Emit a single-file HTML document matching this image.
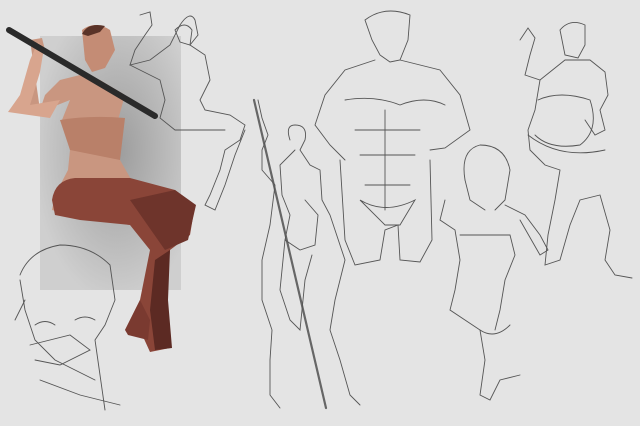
<!DOCTYPE html>
<html><head><style>html,body{margin:0;padding:0;background:#e4e4e4}svg{display:block}</style></head>
<body>
<svg width="640" height="426" viewBox="0 0 640 426" xmlns="http://www.w3.org/2000/svg">
<defs>
<radialGradient id="g" cx="0.55" cy="0.45" r="0.6"><stop offset="0" stop-color="#9c9c9c"/><stop offset="1" stop-color="#cfcfcf"/></radialGradient>
</defs>
<rect width="640" height="426" fill="#e4e4e4"/>
<rect x="40" y="36" width="141" height="254" fill="url(#g)"/>
<!-- painted figure -->
<g>
<path d="M30 40 L42 38 L45 50 L38 60 L30 80 L24 105 L45 110 L70 100 L62 120 L70 150 L68 170 L55 195 L52 210 L80 218 L130 215 L150 205 L140 195 L120 160 L118 120 L125 95 L100 80 L80 75 L60 80 L45 95 L40 110 Z" fill="#c99680"/>
<path d="M8 112 L20 95 L30 60 L38 42 L44 48 L40 72 L30 105 L60 100 L50 118 Z" fill="#d8a58e"/>
<path d="M82 30 Q95 20 110 30 L115 50 L105 68 L92 72 L85 60 Z" fill="#c48c75"/>
<path d="M82 34 Q88 22 105 26 L100 32 L88 36 Z" fill="#5a3328"/>
<path d="M60 120 Q90 115 125 118 L120 160 L95 155 L70 150 Z" fill="#b98069"/>
<path d="M52 200 Q55 180 75 178 L130 178 L175 190 L195 205 L190 235 L170 250 L165 300 L170 348 L150 352 L140 330 L125 330 L140 300 L150 250 L130 225 L80 220 L55 215 Z" fill="#8a4538"/>
<path d="M130 200 L175 190 L196 205 L188 240 L165 250 Z" fill="#6e342b"/>
<path d="M155 260 L170 250 L168 300 L172 348 L155 350 L150 310 Z" fill="#5c2a23"/>
<path d="M125 330 L140 300 L150 320 L148 340 L128 335 Z" fill="#7a3a30"/>
<line x1="9" y1="30" x2="155" y2="116" stroke="#2a2a2a" stroke-width="6" stroke-linecap="round"/>
</g>
<g fill="none" stroke="#555" stroke-width="0.9" stroke-linecap="round">
<!-- top sketch -->
<path d="M140 15 L150 12 L152 25 L145 35 L135 50 L130 65 L150 60 L170 45 L180 25 Q190 10 195 20 L198 35 L190 45 L205 55 L210 80 L200 100 L205 110 L230 115 L245 125 L240 140 L225 150 L220 170 L210 195 L205 205 L215 210 L225 185 L235 155 L245 130"/>
<path d="M130 65 L160 80 L165 100 L160 118 L175 130 L210 130 L225 130"/>
<path d="M175 30 Q185 20 192 30 L190 45 L180 42 Z"/>
<!-- face bottom left -->
<path d="M20 275 Q30 250 60 245 Q90 245 110 265 L115 300 L105 325 L95 340 L100 375 L105 410"/>
<path d="M20 280 L25 310 L35 340 L55 360 L75 370 L95 380"/>
<path d="M35 325 Q45 318 55 325 M75 320 Q85 314 95 320 M30 345 L70 335 L90 350 L60 365 L35 360"/>
<path d="M15 320 L25 300 M40 380 L80 395 L120 405"/>
<!-- staff woman -->
<line x1="254" y1="100" x2="326" y2="408" stroke-width="2.2" stroke="#666"/>
<path d="M258 100 L262 118 L268 135 L262 150 L262 170 L275 185 L270 225 L262 260 L262 300 L272 330 L270 360 L270 395 L280 408"/>
<path d="M290 140 Q285 125 295 125 Q308 125 305 140 L300 150 L310 165 L320 170 L322 200 L330 215 L345 260 L335 300 L330 330 L340 360 L350 395 L360 405"/>
<path d="M295 150 L280 165 L282 195 L290 215 L285 240 L300 250 L315 245 L318 215 L305 200"/>
<path d="M285 240 L280 290 L290 320 L300 330 L305 280 L312 255"/>
<!-- muscle man -->
<path d="M365 20 Q385 5 410 15 L408 40 L400 60 L390 62 L380 55 L372 40 Z"/>
<path d="M375 60 L345 70 L325 95 L315 125 L330 145 L345 160 M400 60 L440 70 L460 95 L470 130 L445 148 L430 150"/>
<path d="M345 100 Q375 95 400 105 Q425 95 445 105 M355 130 L420 130 M360 155 L415 155 M365 185 L410 185 M385 110 L385 210"/>
<path d="M340 160 L345 240 L355 265 L380 260 L385 230 L398 225 L400 260 L420 262 L432 240 L430 160"/>
<path d="M360 200 Q385 215 415 200 L400 225 L385 225 Z"/>
<!-- smiling woman -->
<path d="M465 180 Q460 150 480 145 Q505 145 510 170 L505 200 L495 210"/>
<path d="M465 180 L470 200 L485 210 M445 200 L440 220 L455 230 L460 260 L455 290 L450 310 L480 330 L485 360 L480 395 L490 400 L500 380 L520 375"/>
<path d="M505 205 L525 215 L540 235 L548 250 L540 255 L520 220 M460 235 L510 235 L515 255 L505 280 L500 310 L495 330"/>
<path d="M480 330 Q495 340 510 325"/>
<!-- large woman -->
<path d="M560 30 Q570 18 585 25 L585 45 L578 58 L565 55 Z"/>
<path d="M520 40 L528 28 L535 38 L530 55 L525 75 L540 80 L565 60 L590 60 L605 72 L608 95 L600 110 L605 130 L595 135 L585 120"/>
<path d="M540 80 L535 110 L528 130 L530 150 L545 165 L560 170 L555 200 L548 235 L545 265 L560 260 L570 225 L580 200 L600 195 L610 230 L605 260 L615 275 L632 278"/>
<path d="M538 100 Q560 90 590 100 Q600 130 580 145 Q550 150 535 135"/>
<path d="M528 135 Q560 160 605 150"/>
</g>
</svg>
</body></html>
